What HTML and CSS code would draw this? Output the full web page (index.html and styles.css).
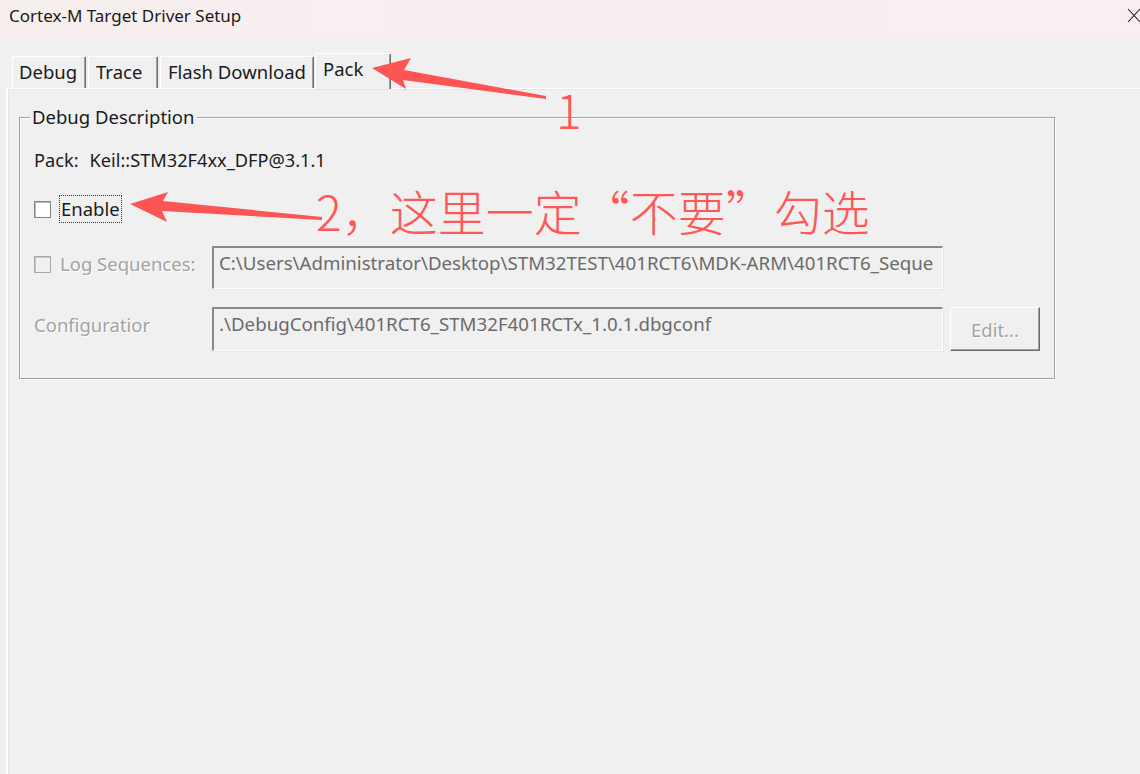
FILE: index.html
```html
<!DOCTYPE html>
<html lang="en">
<head>
<meta charset="utf-8">
<title>Cortex-M Target Driver Setup</title>
<link rel="stylesheet" href="styles.css">
</head>
<body>
<div class="window">
  <div class="titlebar">
    <span class="title">Cortex-M Target Driver Setup</span>
    <svg class="close" viewBox="0 0 14 15" width="14" height="15"><path d="M1 1 L13 14 M13 1 L1 14" stroke="#1a1a1a" stroke-width="1.1" fill="none"/></svg>
  </div>
  <div class="client">
    <div class="tabs">
      <div class="tab t-debug">Debug</div>
      <div class="tab t-trace">Trace</div>
      <div class="tab t-flash">Flash Download</div>
      <div class="tab t-pack active">Pack</div>
    </div>
    <div class="panel">
      <fieldset class="group">
        <legend>Debug Description</legend>
        <div class="pack-line"><span class="pk">Pack:</span><span>Keil::STM32F4xx_DFP@3.1.1</span></div>
        <div class="check-row">
          <span class="box"></span><span class="focus">Enable</span>
        </div>
        <div class="grid">
          <div class="lbl-cell check-row dis">
            <span class="box"></span><span class="lbl">Log Sequences:</span>
          </div>
          <div class="edit">C:\Users\Administrator\Desktop\STM32TEST\401RCT6\MDK-ARM\401RCT6_Seque</div>
          <div></div>
          <div class="lbl-cell"><span class="lbl">Configuratior</span></div>
          <div class="edit">.\DebugConfig\401RCT6_STM32F401RCTx_1.0.1.dbgconf</div>
          <div class="btn">Edit...</div>
        </div>
      </fieldset>
    </div>
  </div>
  <svg class="annot" viewBox="0 0 1140 774" width="1140" height="774">
    <polygon points="372,68 411,58 404,70 546,96 546,99 403,80 406,89" fill="#fd5454"/>
    <polygon points="130,204 168,192 163,201 322,217 322,220 162,211 167,222" fill="#fd5454"/>
  </svg>
  <div class="note n1">1</div>
  <div class="note n2">2，这里一定“不要”勾选</div>
</div>
</body>
</html>
```

FILE: styles.css
```css
* { box-sizing: border-box; }
html, body { margin: 0; padding: 0; }
body {
  width: 1140px;
  height: 774px;
  overflow: hidden;
  background: #f0f0f0;
  font-family: "Noto Sans", "Liberation Sans", sans-serif;
  color: #1b1b1b;
}
.window {
  position: relative;
  width: 1140px;
  height: 774px;
  display: flex;
  flex-direction: column;
}
.titlebar {
  height: 38px;
  flex: none;
  display: flex;
  align-items: center;
  justify-content: space-between;
  padding: 0 0 7px 9px;
  background: linear-gradient(90deg, #f7efee, #f9eef4);
}
.title { font-size: 17px; color: #1a1a1a; }
.close { display: block; margin-right: -1px; }
.client {
  flex: 1;
  display: flex;
  flex-direction: column;
  padding-top: 15px;
}
.tabs {
  display: flex;
  align-items: flex-end;
  height: 35px;
  padding-left: 12px;
  position: relative;
  z-index: 1;
}
.tab {
  height: 32px;
  padding: 0 0 0 6px;
  font-size: 18.5px;
  line-height: 30px;
  white-space: nowrap;
  color: #1a1a1a;
  border-top: 1px solid #fff;
  border-left: 1px solid #fff;
  border-right: 1px solid #6e6e6e;
  box-shadow: inset -1px 0 0 #a0a0a0;
  border-radius: 2px 2px 0 0;
  margin-right: 2px;
}
.t-debug { width: 74px; }
.t-trace { width: 70px; padding-left: 7px; }
.t-flash { width: 154px; padding-left: 7px; }
.t-pack { width: 76px; padding-left: 7px; }
.tab.active {
  height: 36px;
  margin-bottom: -1px;
  margin-left: -1px;
  line-height: 30px;
  background: #f0f0f0;
}
.panel {
  flex: 1;
  margin-left: 6px;
  border-top: 1px solid #fff;
  border-left: 2px solid #fff;
  box-shadow: inset 1px 1px 0 #e4e4e4;
}
.group {
  margin: 16px 0 0 11px;
  width: 1036px;
  border: 1px solid #a0a0a0;
  box-shadow: 1px 1px 0 #fff, inset 1px 1px 0 #fff;
  padding: 0 14px 27px 14px;
  min-width: 0;
}
.group legend {
  font-size: 18.5px;
  line-height: 24px;
  padding: 0 2px;
  margin-left: -4px;
  color: #1a1a1a;
}
.pack-line {
  margin-top: 19px;
  font-size: 18.2px;
  line-height: 24px;
  white-space: nowrap;
}
.pk { margin-right: 11px; }
.check-row {
  display: flex;
  align-items: center;
}
.group > .check-row { margin-top: 23px; }
.box {
  width: 17px;
  height: 17px;
  flex: none;
  background: #fff;
  border: 1px solid #858585;
  box-shadow: inset 1px 1px 0 #b9b9b9;
  margin-right: 8px;
}
.focus {
  font-size: 18.5px;
  line-height: 26px;
  padding: 0 1px;
  border: 1px dotted #333;
}
.grid {
  margin-top: 23px;
  display: grid;
  grid-template-columns: 171px 731px 90px;
  grid-template-rows: 43px 44px;
  column-gap: 7px;
  row-gap: 18px;
}
.lbl-cell { padding-top: 6px; height: 30px; }
.lbl {
  font-size: 18.5px;
  line-height: 24px;
  color: #a3a3a3;
  text-shadow: 1px 1px 0 #fff;
  white-space: nowrap;
}
.dis .box {
  background: #f0f0f0;
  border-color: #a8a8a8;
  box-shadow: inset 1px 1px 0 #c8c8c8;
  margin-right: 9px;
}
.edit {
  border-top: 2px solid #8a8a8a;
  border-left: 2px solid #8a8a8a;
  border-right: 1px solid #fff;
  border-bottom: 1px solid #fff;
  box-shadow: 1px 1px 0 #e6e6e6;
  padding: 3px 0 0 5px;
  font-size: 18.7px;
  line-height: 24px;
  color: #6b6b6b;
  white-space: nowrap;
  overflow: hidden;
}
.btn {
  border-top: 1px solid #fff;
  border-left: 1px solid #fff;
  border-right: 1px solid #6a6a6a;
  border-bottom: 1px solid #6a6a6a;
  box-shadow: inset -1px -1px 0 #a0a0a0;
  display: flex;
  align-items: center;
  justify-content: center;
  font-size: 18.5px;
  color: #a3a3a3;
  text-shadow: 1px 1px 0 #fff;
}
.annot {
  position: absolute;
  left: 0;
  top: 0;
  z-index: 2;
  pointer-events: none;
}
.note {
  position: absolute;
  z-index: 2;
  font-family: "Noto Sans CJK SC", "Noto Sans", sans-serif;
  font-weight: 300;
  font-size: 48px;
  line-height: 48px;
  color: #ff5656;
  white-space: nowrap;
}
.n1 { left: 556px; top: 84px; }
.n2 { left: 316px; top: 186px; }
```
